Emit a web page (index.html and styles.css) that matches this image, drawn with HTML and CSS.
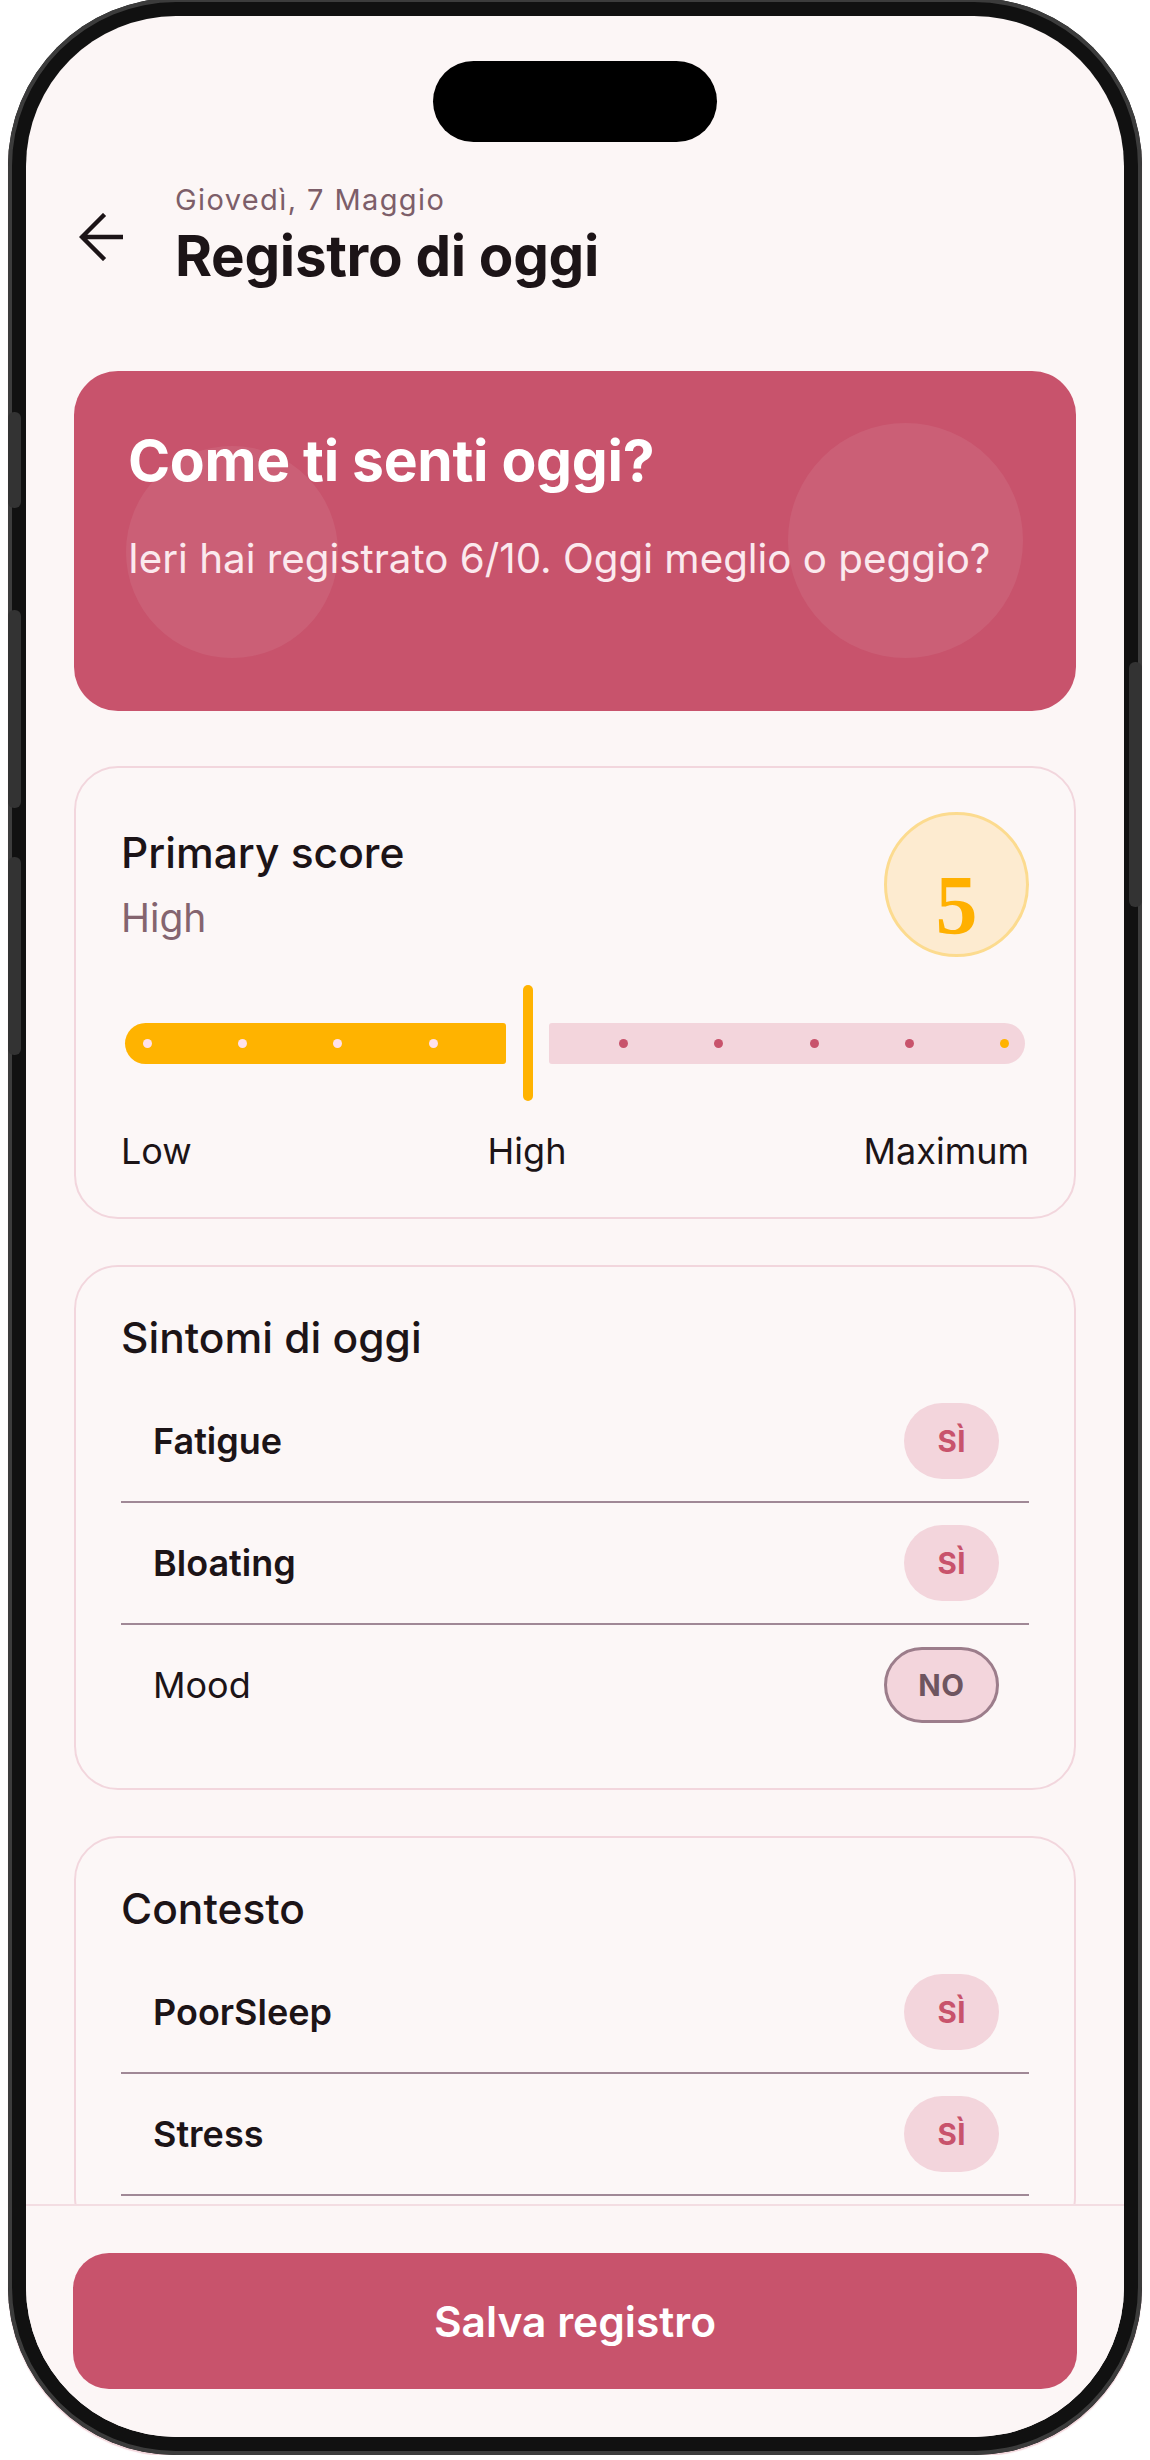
FILE: index.html
```html
<!DOCTYPE html>
<html lang="it">
<head>
<meta charset="utf-8">
<title>Registro di oggi</title>
<link rel="stylesheet" href="styles.css">
</head>
<body>
<div class="phone">
  <span class="side-btn side-l1"></span>
  <span class="side-btn side-l2"></span>
  <span class="side-btn side-l3"></span>
  <span class="side-btn side-r1"></span>
  <div class="screen">
    <div class="island"></div>
    <main class="content">
      <header class="header">
        <button class="back" aria-label="Indietro">
          <svg viewBox="0 0 44 48" width="44" height="48"><path d="M42 24H4M24 3L3 24l21 21" fill="none" stroke="#1c1417" stroke-width="4.4" stroke-linecap="square" stroke-linejoin="miter"/></svg>
        </button>
        <div class="titles">
          <p class="date">Giovedì, 7 Maggio</p>
          <h1 class="title">Registro di oggi</h1>
        </div>
      </header>

      <section class="hero">
        <span class="bubble bubble-a"></span>
        <span class="bubble bubble-b"></span>
        <h2 class="hero-title">Come ti senti oggi?</h2>
        <p class="hero-sub">Ieri hai registrato 6/10. Oggi meglio o peggio?</p>
      </section>

      <section class="card score-card">
        <div class="score-head">
          <div class="score-text">
            <h3 class="card-title">Primary score</h3>
            <p class="score-level">High</p>
          </div>
          <div class="score-badge">5</div>
        </div>
        <div class="slider">
          <div class="seg seg-fill"></div>
          <div class="thumb-slot"><span class="thumb"></span></div>
          <div class="seg seg-rest"></div>
          <div class="dots">
            <span class="dot dot-on"></span>
            <span class="dot dot-on"></span>
            <span class="dot dot-on"></span>
            <span class="dot dot-on"></span>
            <span class="dot dot-hidden"></span>
            <span class="dot dot-off"></span>
            <span class="dot dot-off"></span>
            <span class="dot dot-off"></span>
            <span class="dot dot-off"></span>
            <span class="dot dot-max"></span>
          </div>
        </div>
        <div class="scale-labels">
          <span>Low</span>
          <span class="scale-mid" style="left: 406px">High</span>
          <span>Maximum</span>
        </div>
      </section>

      <section class="card list-card">
        <h3 class="card-title">Sintomi di oggi</h3>
        <ul class="rows">
          <li class="row"><span class="row-label strong">Fatigue</span><span class="pill pill-yes">SÌ</span></li>
          <li class="row"><span class="row-label strong">Bloating</span><span class="pill pill-yes">SÌ</span></li>
          <li class="row"><span class="row-label">Mood</span><span class="pill pill-no">NO</span></li>
        </ul>
      </section>

      <section class="card list-card">
        <h3 class="card-title">Contesto</h3>
        <ul class="rows">
          <li class="row"><span class="row-label strong">PoorSleep</span><span class="pill pill-yes">SÌ</span></li>
          <li class="row row-open"><span class="row-label strong">Stress</span><span class="pill pill-yes">SÌ</span></li>
        </ul>
      </section>
    </main>
    <footer class="bottom-bar">
      <button class="save">Salva registro</button>
    </footer>
  </div>
</div>
</body>
</html>
```

FILE: styles.css
```css
* { box-sizing: border-box; }

html, body {
  margin: 0;
  padding: 0;
  background: #ffffff;
}

body {
  font-family: "Inter", "Noto Sans", sans-serif;
  color: #1c1417;
}

.phone {
  position: relative;
  width: 1134px;
  height: 2457px;
  margin: -2px 0 0 8px;
  padding: 18px;
  border-radius: 168px;
  background: #111111;
  box-shadow: inset 0 0 0 4px #3c3c3c, 0 2px 1px rgba(200, 83, 108, 0.25);
}

.side-btn {
  position: absolute;
  width: 13px;
  border-radius: 6px;
  background: #333333;
}
.side-l1 { left: 0; top: 414px; height: 96px; }
.side-l2 { left: 0; top: 612px; height: 198px; }
.side-l3 { left: 0; top: 859px; height: 198px; }
.side-r1 { right: 0; top: 664px; height: 245px; }

.screen {
  position: relative;
  width: 1098px;
  height: 2421px;
  border-radius: 150px;
  overflow: hidden;
  background: #fcf6f6;
  display: flex;
  flex-direction: column;
}

.island {
  position: absolute;
  top: 45px;
  left: 407px;
  width: 284px;
  height: 81px;
  border-radius: 41px;
  background: #000;
  z-index: 5;
}

.content {
  flex: 1;
  min-height: 0;
  overflow: hidden;
  padding: 166px 48px 0;
}

/* Header */
.header {
  display: flex;
  align-items: center;
  gap: 52px;
  margin-bottom: 83px;
}
.back {
  border: 0;
  padding: 0;
  margin: 4px 0 0 5px;
  background: none;
  width: 44px;
  height: 48px;
  display: flex;
}
.titles { display: flex; flex-direction: column; }
.date {
  margin: 0;
  font-size: 29px;
  line-height: 36px;
  letter-spacing: 1.4px;
  color: #7d5e69;
}
.title {
  margin: 6px 0 0;
  font-size: 56.5px;
  line-height: 64px;
  font-weight: 700;
  color: #1c1417;
  letter-spacing: -0.3px;
}

/* Hero */
.hero {
  position: relative;
  overflow: hidden;
  height: 340px;
  padding: 59px 54px 0;
  border-radius: 44px;
  background: #c8536c;
  color: #fff;
}
.bubble {
  position: absolute;
  border-radius: 50%;
  background: rgba(255, 255, 255, 0.07);
}
.bubble-a { left: 52px; top: 75px; width: 212px; height: 212px; }
.bubble-b { left: 714px; top: 52px; width: 235px; height: 235px; }
.hero-title {
  position: relative;
  margin: 0;
  font-size: 57px;
  line-height: 62px;
  font-weight: 700;
  letter-spacing: -0.3px;
}
.hero-sub {
  position: relative;
  margin: 42px 0 0;
  font-size: 40.3px;
  line-height: 50px;
  font-weight: 400;
  color: #fbe9ee;
}

/* Cards */
.card {
  margin-top: 55px;
  border: 2px solid #f2d6dd;
  border-radius: 44px;
  background: #fcf7f7;
}
.list-card {
  margin-top: 46px;
  padding: 46px 45px 43px;
}
.card-title {
  margin: 0;
  font-size: 42.5px;
  line-height: 50px;
  font-weight: 500;
  color: #1c1417;
}

.score-card {
  padding: 44px 45px 45px;
}
.score-head {
  display: flex;
  justify-content: space-between;
  align-items: center;
}
.score-level {
  margin: 16px 0 0;
  font-size: 39px;
  line-height: 48px;
  color: #84646f;
}
.score-badge {
  width: 145px;
  height: 145px;
  border-radius: 50%;
  background: #fdebd0;
  border: 3px solid #fcdb8f;
  display: flex;
  align-items: center;
  justify-content: center;
  font-family: "Liberation Serif", "Times New Roman", serif;
  font-weight: 700;
  font-size: 84px;
  line-height: 1;
  color: #ffb000;
  padding-top: 42px;
}

.slider {
  position: relative;
  margin: 28px 4px 0;
  height: 116px;
  display: flex;
  align-items: center;
}
.seg { height: 41px; }
.seg-fill {
  width: 381px;
  background: #ffb300;
  border-radius: 21px 3px 3px 21px;
}
.seg-rest {
  flex: 1;
  background: #f3d5dc;
  border-radius: 3px 21px 21px 3px;
}
.thumb-slot {
  width: 43px;
  height: 116px;
  display: flex;
  justify-content: center;
}
.thumb {
  width: 10px;
  height: 116px;
  border-radius: 5px;
  background: #ffb300;
}
.dots {
  position: absolute;
  inset: 0;
  display: flex;
  align-items: center;
  justify-content: space-between;
  padding: 0 16px 0 18px;
  pointer-events: none;
}
.dot {
  width: 9px;
  height: 9px;
  border-radius: 50%;
}
.dot-on { background: #ffe1ec; }
.dot-off { background: #c8536c; }
.dot-max { background: #ffb300; }
.dot-hidden { background: transparent; }

.scale-labels {
  position: relative;
  margin-top: 29px;
  display: flex;
  justify-content: space-between;
  font-size: 36px;
  line-height: 42px;
  color: #1c1417;
}
.scale-mid {
  position: absolute;
  top: 0;
  transform: translateX(-50%);
}

/* Rows */
.rows {
  list-style: none;
  margin: 18px 0 0;
  padding: 0;
}
.row {
  display: flex;
  align-items: center;
  justify-content: space-between;
  padding: 22px 30px 22px 32px;
  border-bottom: 2px solid #a08896;
}
.row:last-child { border-bottom: 0; }
.row.row-open { border-bottom: 2px solid #a08896; }
.row-label {
  font-size: 36px;
  line-height: 44px;
  font-weight: 400;
  color: #1c1417;
}
.row-label.strong { font-weight: 600; }

.pill {
  height: 76px;
  padding: 0 33px;
  border-radius: 38px;
  background: #f3d5dc;
  display: flex;
  align-items: center;
  font-size: 29.5px;
  font-weight: 700;
  letter-spacing: 0.5px;
}
.pill-yes { color: #c8536c; }
.pill-no {
  color: #6e5560;
  border: 3px solid #9c7d8b;
  padding: 0 31.5px;
}

/* Bottom bar */
.bottom-bar {
  flex: none;
  border-top: 2px solid #f3dde2;
  padding: 47px 47px 48px;
  background: #fcf6f6;
}
.save {
  display: block;
  width: 100%;
  height: 136px;
  border: 0;
  border-radius: 36px;
  background: #c8536c;
  color: #ffffff;
  font-family: "Inter", "Noto Sans", sans-serif;
  font-size: 42.5px;
  font-weight: 600;
}
```
